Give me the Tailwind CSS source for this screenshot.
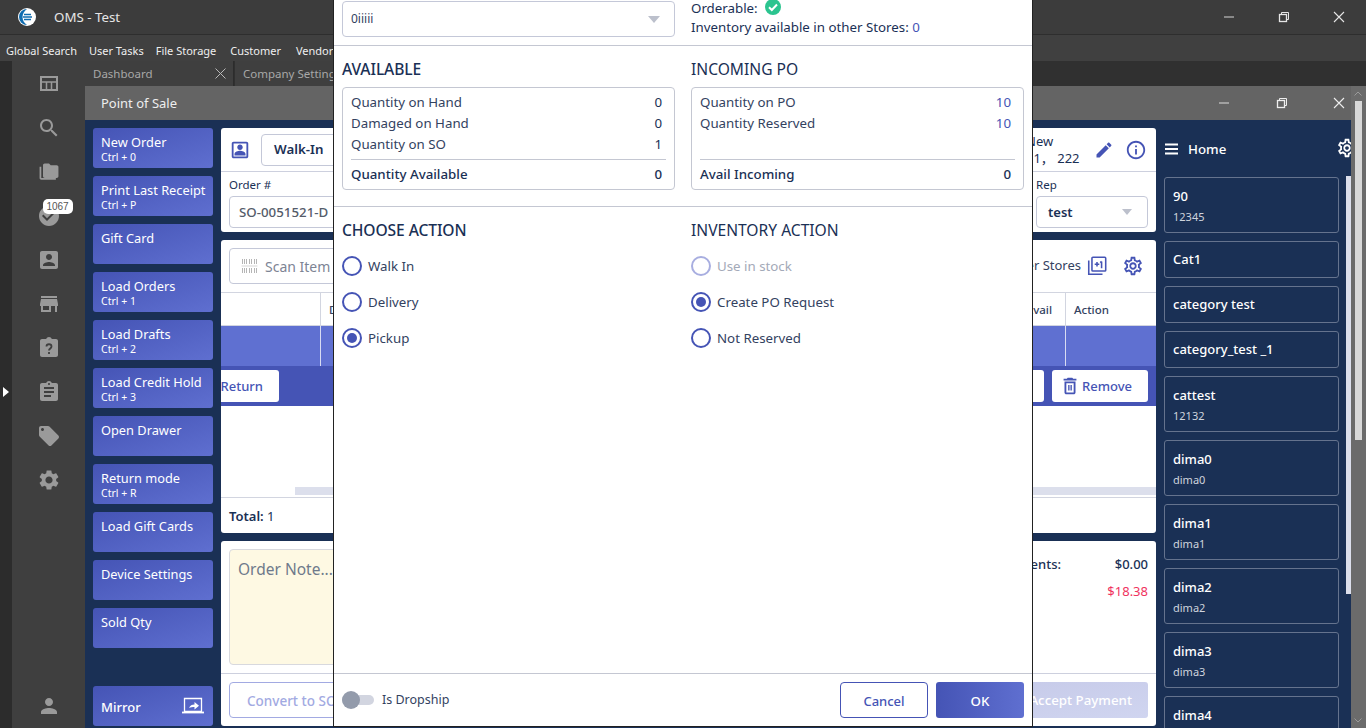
<!doctype html>
<html><head><meta charset="utf-8"><title>OMS - Test</title>
<script src="https://cdn.jsdelivr.net/npm/@tailwindcss/browser@4"></script></head>
<body class="m-0">
<div class="relative w-[1366px] h-[728px] overflow-hidden flex flex-col bg-[#303030] font-['Noto_Sans','Noto_Sans_CJK_SC',sans-serif] text-[13.3px] text-[#1a3055]">

<!-- title bar -->
<div class="h-[35px] shrink-0 flex items-center bg-[#3c3c3c] border-b border-[#2e2e2e] text-[#e6e6e6]">
  <svg class="ml-[18px] w-[18px] h-[18px]" viewBox="0 0 18 18"><circle cx="9" cy="9" r="9" fill="#fff"/><path d="M9 1a8 8 0 0 0 0 16c-3-2-4.500-5-4.500-8S6 3 9 1z" fill="#0f6cb0"/><path d="M6 6.500h7M5 9h9M6 11.500h7" stroke="#0f6cb0" stroke-width="1.300"/></svg>
  <span class="ml-[18px] pt-[2px] text-[13.3px]">OMS - Test</span>
  <div class="ml-auto flex items-center">
    <svg class="w-3 h-3 mr-[43px]" viewBox="0 0 12 12"><path d="M1 6h10" stroke="#aaa" stroke-width="1.400"/></svg>
    <svg class="w-3 h-3 mr-[43px]" viewBox="0 0 12 12" fill="none" stroke="#e6e6e6"><rect x="1.500" y="3.500" width="7" height="7" stroke-width="1.300"/><path d="M3.500 3V1.500h7v7H9"/></svg>
    <svg class="w-3 h-3 mr-[21px]" viewBox="0 0 12 12"><path d="M1 1l10 10M11 1L1 11" stroke="#e6e6e6" stroke-width="1.100"/></svg>
  </div>
</div>
<!-- menu bar -->
<div class="h-[26px] shrink-0 flex items-center gap-[12px] pl-[6px] pt-[6px] bg-[#404040] text-[#efefef] text-[11px]">
  <span>Global Search</span><span>User Tasks</span><span>File Storage</span><span class="ml-[2px]">Customer</span><span class="ml-[3px]">Vendor</span>
</div>

<div class="flex-1 flex min-h-0">
  <!-- collapse strip -->
  <div class="w-3 shrink-0 bg-[#2c2c2c] flex items-center">
    <svg class="w-[6px] h-[10px] ml-[3px] mt-[-5px]" viewBox="0 0 6 10"><path d="M0 0l6 5-6 5z" fill="#fff"/></svg>
  </div>
  <!-- sidebar -->
  <div class="w-[73px] shrink-0 bg-[#3f3f3f] flex flex-col items-center pt-[11px] pb-[10px] gap-5 text-[#9a9a9a]">
    <svg class="w-6 h-6" viewBox="0 0 24 24" fill="none" stroke="currentColor" stroke-width="2"><rect x="4" y="5" width="16" height="13" /><path d="M4 10h16M9.500 10v8M14.500 10v8" stroke-width="1.500"/></svg>
    <svg class="w-6 h-6" viewBox="0 0 24 24" fill="currentColor"><path d="M15.500 14h-.79l-.28-.27C15.410 12.590 16 11.110 16 9.500 16 5.910 13.090 3 9.500 3S3 5.910 3 9.500 5.910 16 9.500 16c1.610 0 3.090-.59 4.230-1.570l.27.28v.79l5 4.990L20.490 19l-4.990-5zm-6 0C7.010 14 5 11.990 5 9.500S7.010 5 9.500 5 14 7.010 14 9.500 11.990 14 9.500 14z"/></svg>
    <svg class="w-6 h-6" viewBox="-2 -2 28 28" fill="currentColor"><path d="M3 6H1v13c0 1.100.9 2 2 2h17v-2H3V6zM21 4h-7l-2-2H7c-1.100 0-1.990.9-1.990 2L5 17c0 1.100.9 2 2 2h14c1.100 0 2-.9 2-2V6c0-1.100-.9-2-2-2z"/></svg>
    <div class="relative w-6 h-6">
      <svg class="w-6 h-6" viewBox="0 0 24 24" fill="currentColor"><path d="M12 2C6.480 2 2 6.480 2 12s4.480 10 10 10 10-4.480 10-10S17.520 2 12 2zm-2 15l-5-5 1.410-1.410L10 14.170l7.590-7.590L19 8l-9 9z"/></svg>
      <span class="absolute left-[6px] top-[-5px] w-[30px] h-[15px] rounded-[5px] bg-white text-[#555] text-[10px] flex items-center justify-center font-['Liberation_Sans',sans-serif]">1067</span>
    </div>
    <svg class="w-6 h-6" viewBox="0 0 24 24" fill="currentColor"><path d="M3 5v14c0 1.100.89 2 2 2h14c1.100 0 2-.9 2-2V5c0-1.100-.9-2-2-2H5c-1.110 0-2 .9-2 2zm12 4c0 1.660-1.340 3-3 3s-3-1.340-3-3 1.340-3 3-3 3 1.340 3 3zm-9 8c0-2 4-3.100 6-3.100s6 1.100 6 3.100v1H6v-1z"/></svg>
    <svg class="w-6 h-6" viewBox="0 0 24 24" fill="currentColor"><path d="M20 4H4v2h16V4zm1 10v-2l-1-5H4l-1 5v2h1v6h10v-6h4v6h2v-6h1zm-9 4H6v-4h6v4z"/></svg>
    <svg class="w-6 h-6" viewBox="0 0 24 24"><path fill="currentColor" d="M19 3h-4.180C14.400 1.840 13.300 1 12 1c-1.300 0-2.400.84-2.820 2H5c-1.100 0-2 .9-2 2v14c0 1.100.9 2 2 2h14c1.100 0 2-.9 2-2V5c0-1.100-.9-2-2-2z"/><path d="M9.500 10.500c0-3 5-3 5 0 0 2-2.500 2-2.500 4M12 16v2" fill="none" stroke="#3f3f3f" stroke-width="1.800"/></svg>
    <svg class="w-6 h-6" viewBox="0 0 24 24" fill="currentColor"><path d="M19 3h-4.180C14.400 1.840 13.300 1 12 1c-1.300 0-2.400.84-2.820 2H5c-1.100 0-2 .9-2 2v14c0 1.100.9 2 2 2h14c1.100 0 2-.9 2-2V5c0-1.100-.9-2-2-2zm-7 0c.55 0 1 .45 1 1s-.45 1-1 1-1-.45-1-1 .45-1 1-1zm2 14H7v-2h7v2zm3-4H7v-2h10v2zm0-4H7V7h10v2z"/></svg>
    <svg class="w-6 h-6" viewBox="0 0 24 24" fill="currentColor"><path d="M21.410 11.580l-9-9C12.050 2.220 11.550 2 11 2H4c-1.100 0-2 .9-2 2v7c0 .55.22 1.050.59 1.420l9 9c.36.36.86.58 1.410.58.55 0 1.050-.22 1.410-.59l7-7c.37-.36.59-.86.59-1.410 0-.55-.23-1.060-.59-1.420zM5.500 7C4.670 7 4 6.330 4 5.500S4.670 4 5.500 4 7 4.670 7 5.500 6.330 7 5.500 7z"/></svg>
    <svg class="w-6 h-6" viewBox="0 0 24 24" fill="currentColor"><path d="M19.140 12.940c.04-.3.06-.61.06-.94 0-.32-.02-.64-.07-.94l2.030-1.580c.18-.14.23-.41.12-.61l-1.920-3.320c-.12-.22-.37-.29-.59-.22l-2.390.96c-.5-.38-1.030-.7-1.620-.94l-.36-2.540c-.04-.24-.24-.41-.48-.41h-3.840c-.24 0-.43.17-.47.41l-.36 2.540c-.59.24-1.130.57-1.620.94l-2.390-.96c-.22-.08-.47 0-.59.22L2.740 8.870c-.12.21-.08.47.12.61l2.030 1.580c-.05.3-.09.63-.09.94s.02.64.07.94l-2.030 1.580c-.18.14-.23.41-.12.61l1.920 3.320c.12.22.37.29.59.22l2.390-.96c.5.38 1.030.7 1.620.94l.36 2.540c.05.24.24.41.48.41h3.840c.24 0 .44-.17.47-.41l.36-2.540c.59-.24 1.130-.56 1.620-.94l2.390.96c.22.08.47 0 .59-.22l1.920-3.320c.12-.22.07-.47-.12-.61l-2.010-1.580zM12 15.600c-1.980 0-3.600-1.620-3.600-3.600s1.620-3.600 3.600-3.600 3.600 1.620 3.600 3.600-1.620 3.600-3.600 3.600z"/></svg>
    <svg class="w-6 h-6 mt-auto" viewBox="0 0 24 24" fill="currentColor"><path d="M12 12c2.210 0 4-1.790 4-4s-1.790-4-4-4-4 1.790-4 4 1.790 4 4 4zm0 2c-2.670 0-8 1.340-8 4v2h16v-2c0-2.660-5.330-4-8-4z"/></svg>
  </div>

  <div class="flex-1 min-w-0 flex flex-col">
    <!-- tabs -->
    <div class="h-[25px] shrink-0 flex text-[11.500px] text-[#a8a8a8]">
      <div class="w-[149px] bg-[#3f3f3f] flex items-center justify-between pl-2 pr-[7px] border-r border-[#2c2c2c]"><span class="pt-px">Dashboard</span><svg class="w-[11px] h-[11px]" viewBox="0 0 11 11"><path d="M.5.5l10 10M10.500.5l-10 10" stroke="#b8b8b8"/></svg></div>
      <div class="w-[110px] bg-[#3f3f3f] flex items-center pl-2 ml-px"><span class="whitespace-nowrap pt-px">Company Settings</span></div>
    </div>
    <div class="flex-1 min-h-0 flex">
      <div class="flex-1 min-w-0 flex flex-col">
        <!-- window title -->
        <div class="h-[34px] shrink-0 bg-[#646464] flex items-center pl-4 text-[#eeeeee] text-[13px]">
          <span class="pt-[2px]">Point of Sale</span>
          <div class="ml-auto flex items-center">
            <svg class="w-3 h-3 mr-[46px]" viewBox="0 0 12 12"><path d="M1 6h10" stroke="#bbb" stroke-width="1.400"/></svg>
            <svg class="w-3 h-3 mr-[45px]" viewBox="0 0 12 12" fill="none" stroke="#eee"><rect x="1.500" y="3.500" width="7" height="7" stroke-width="1.300"/><path d="M3.500 3V1.500h7v7H9"/></svg>
            <svg class="w-3 h-3 mr-[6px]" viewBox="0 0 12 12"><path d="M1 1l10 10M11 1L1 11" stroke="#eee" stroke-width="1.100"/></svg>
          </div>
        </div>
        <!-- POS body -->
        <div class="flex-1 min-h-0 bg-[#1a3055] flex overflow-hidden">
          <!-- action buttons -->
          <div class="w-[136px] shrink-0 pl-2 pr-2 pt-2 flex flex-col gap-2 text-white text-[12.800px] leading-[16px]">
            <div class="h-10 shrink-0 rounded-[3px] bg-linear-to-br from-[#4554b5] to-[#5f6fd0] pl-2 pt-[6px]">New Order<div class="text-[10.500px] leading-[13px] mt-px">Ctrl + 0</div></div>
            <div class="h-10 shrink-0 rounded-[3px] bg-linear-to-br from-[#4554b5] to-[#5f6fd0] pl-2 pt-[6px]">Print Last Receipt<div class="text-[10.500px] leading-[13px] mt-px">Ctrl + P</div></div>
            <div class="h-10 shrink-0 rounded-[3px] bg-linear-to-br from-[#4554b5] to-[#5f6fd0] pl-2 pt-[6px]">Gift Card</div>
            <div class="h-10 shrink-0 rounded-[3px] bg-linear-to-br from-[#4554b5] to-[#5f6fd0] pl-2 pt-[6px]">Load Orders<div class="text-[10.500px] leading-[13px] mt-px">Ctrl + 1</div></div>
            <div class="h-10 shrink-0 rounded-[3px] bg-linear-to-br from-[#4554b5] to-[#5f6fd0] pl-2 pt-[6px]">Load Drafts<div class="text-[10.500px] leading-[13px] mt-px">Ctrl + 2</div></div>
            <div class="h-10 shrink-0 rounded-[3px] bg-linear-to-br from-[#4554b5] to-[#5f6fd0] pl-2 pt-[6px]">Load Credit Hold<div class="text-[10.500px] leading-[13px] mt-px">Ctrl + 3</div></div>
            <div class="h-10 shrink-0 rounded-[3px] bg-linear-to-br from-[#4554b5] to-[#5f6fd0] pl-2 pt-[6px]">Open Drawer</div>
            <div class="h-10 shrink-0 rounded-[3px] bg-linear-to-br from-[#4554b5] to-[#5f6fd0] pl-2 pt-[6px]">Return mode<div class="text-[10.500px] leading-[13px] mt-px">Ctrl + R</div></div>
            <div class="h-10 shrink-0 rounded-[3px] bg-linear-to-br from-[#4554b5] to-[#5f6fd0] pl-2 pt-[6px]">Load Gift Cards</div>
            <div class="h-10 shrink-0 rounded-[3px] bg-linear-to-br from-[#4554b5] to-[#5f6fd0] pl-2 pt-[6px]">Device Settings</div>
            <div class="h-10 shrink-0 rounded-[3px] bg-linear-to-br from-[#4554b5] to-[#5f6fd0] pl-2 pt-[6px]">Sold Qty</div>
            <div class="h-10 shrink-0 rounded-[3px] bg-linear-to-br from-[#4554b5] to-[#5f6fd0] pl-2 pr-2 mt-[30px] flex items-center justify-between text-[13px] font-medium"><span class="pt-[2px]">Mirror</span>
              <svg class="w-6 h-[18px]" viewBox="0 0 24 18" fill="none" stroke="#fff"><path d="M3.500 1.500h17v13h-17z" stroke-width="1.300"/><path d="M1 15.500h22" stroke-width="1.800"/><path d="M8 11c1-2.500 3-3.500 5.500-3.500V5l4.500 3.800-4.500 3.700v-2.500c-2 0-4 .2-5.500 1z" fill="#fff" stroke="none"/></svg>
            </div>
          </div>

          <!-- main column -->
          <div class="w-[935px] shrink-0 pt-2 flex flex-col gap-2">
            <!-- customer card -->
            <div class="h-[104px] shrink-0 bg-white rounded-[3px] flex flex-col">
              <div class="h-[44px] shrink-0 flex items-center justify-between pl-2 pr-[8px] border-b border-[#cdd0de]">
                <div class="flex items-center gap-[10px]">
                  <svg class="w-[22px] h-[22px]" viewBox="0 0 24 24" fill="#4554b5"><path d="M19 5v14H5V5h14m0-2H5c-1.110 0-2 .9-2 2v14c0 1.100.89 2 2 2h14c1.100 0 2-.9 2-2V5c0-1.100-.9-2-2-2zm-7 9c-1.650 0-3-1.350-3-3s1.350-3 3-3 3 1.350 3 3-1.350 3-3 3zm6 6H6v-1.530c0-2.500 3.970-3.580 6-3.580s6 1.080 6 3.580V18z"/></svg>
                  <span class="h-8 w-[110px] border border-[#c4c8d8] rounded-[4px] flex items-center pl-3 font-semibold">Walk-In</span>
                </div>
                <div class="flex items-center">
                  <div class="w-[55px] text-[13px] leading-[17px] mr-[13px] text-left whitespace-nowrap pt-px">New<br>11， 222</div>
                  <svg class="w-[20px] h-[20px] mr-[11px]" viewBox="0 0 24 24" fill="#4554b5"><path d="M3 17.250V21h3.750L17.810 9.940l-3.750-3.750L3 17.250zM20.710 7.040c.39-.39.39-1.020 0-1.410l-2.340-2.340c-.39-.39-1.020-.39-1.410 0l-1.830 1.830 3.750 3.750 1.830-1.830z"/></svg>
                  <svg class="w-[22px] h-[22px] mr-[1px]" viewBox="0 0 24 24" fill="#4554b5"><path d="M11 7h2v2h-2zm0 4h2v6h-2zm1-9C6.480 2 2 6.480 2 12s4.480 10 10 10 10-4.480 10-10S17.520 2 12 2zm0 18c-4.410 0-8-3.590-8-8s3.590-8 8-8 8 3.590 8 8-3.590 8-8 8z"/></svg>
                </div>
              </div>
              <div class="flex justify-between px-2 pt-[5px]">
                <div><div class="text-[11.500px] leading-[16px]">Order #</div><div class="mt-[3px] w-[200px] h-8 border border-[#c4c8d8] rounded-[4px] flex items-center pl-[9px] pt-[2px] font-medium text-[#555c6a] text-[13.3px]">SO-0051521-D</div></div>
                <div><div class="text-[11.500px] leading-[16px]">Rep</div><div class="mt-[3px] w-[112px] h-8 border border-[#c4c8d8] rounded-[4px] flex items-center justify-between pl-[11px] pr-[15px] font-semibold text-[13px]"><span class="pt-[2px]">test</span><span class="w-0 h-0 border-x-[5px] border-x-transparent border-t-[6px] border-t-[#bcc0cc]"></span></div></div>
              </div>
            </div>

            <!-- items card -->
            <div class="h-[293px] shrink-0 bg-white rounded-[3px] flex flex-col">
              <div class="h-[52px] shrink-0 flex items-center justify-between pl-2 pr-[12px]">
                <div class="w-[200px] h-9 border border-[#c4c8d8] rounded-[4px] flex items-center gap-[7px] pl-[11px] text-[#7d8494] text-[14px]">
                  <svg class="w-[17px] h-[14px]" viewBox="0 0 16 14" fill="none" stroke="#b5b5b5"><path d="M0 7h16" stroke="#d5d5d5"/><path d="M1 0v5M3 0v5M5 0v5M8 0v5M10 0v5M13 0v5M15 0v5M1 9v5M3 9v5M5 9v5M8 9v5M10 9v5M13 9v5M15 9v5"/></svg>
                  Scan Item
                </div>
                <div class="flex items-center">
                  <span class="mr-[5px] text-[#33425f] text-[13px]">Other Stores</span>
                  <svg class="w-[22px] h-[22px] mr-[14px]" viewBox="0 0 24 24" fill="none" stroke="#4554b5" stroke-width="1.700"><path d="M3 6v15h15"/><rect x="6.500" y="2.500" width="15" height="15" rx="1"/><path d="M9.500 10h5M12 7.500v5M17 7v7.500l0 0M17 7l-1.500 1.200"/></svg>
                  <svg class="w-[22px] h-[22px]" viewBox="0 0 24 24" fill="#4554b5"><path d="M19.430 12.980c.04-.32.07-.64.07-.98 0-.34-.03-.66-.07-.98l2.110-1.650c.19-.15.24-.42.12-.64l-2-3.460c-.09-.16-.26-.25-.44-.25-.06 0-.12.01-.17.03l-2.490 1c-.52-.4-1.080-.73-1.690-.98l-.38-2.650C14.460 2.180 14.250 2 14 2h-4c-.25 0-.46.18-.49.42l-.38 2.650c-.61.25-1.170.59-1.690.98l-2.490-1c-.06-.02-.12-.03-.18-.03-.17 0-.34.09-.43.25l-2 3.460c-.13.22-.07.49.12.64l2.110 1.650c-.04.32-.07.65-.07.98 0 .33.03.66.07.98l-2.110 1.650c-.19.15-.24.42-.12.64l2 3.460c.09.16.26.25.44.25.06 0 .12-.01.17-.03l2.490-1c.52.4 1.080.73 1.690.98l.38 2.650c.03.24.24.42.49.42h4c.25 0 .46-.18.49-.42l.38-2.650c.61-.25 1.170-.59 1.690-.98l2.490 1c.06.02.12.03.18.03.17 0 .34-.09.43-.25l2-3.460c.12-.22.07-.49-.12-.64l-2.110-1.650zm-1.980-1.710c.04.31.05.52.05.73 0 .21-.02.43-.05.73l-.14 1.130.89.7 1.080.84-.7 1.210-1.270-.51-1.040-.42-.9.68c-.43.32-.84.56-1.250.73l-1.060.43-.16 1.130-.2 1.350h-1.400l-.19-1.350-.16-1.130-1.060-.43c-.43-.18-.83-.41-1.230-.71l-.91-.7-1.060.43-1.270.51-.7-1.210 1.080-.84.89-.7-.14-1.130c-.03-.31-.05-.54-.05-.74s.02-.43.05-.73l.14-1.130-.89-.7-1.080-.84.7-1.210 1.270.51 1.040.42.9-.68c.43-.32.84-.56 1.250-.73l1.060-.43.16-1.130.2-1.350h1.390l.19 1.350.16 1.130 1.060.43c.43.18.83.41 1.230.71l.91.7 1.060-.43 1.270-.51.7 1.210-1.070.85-.89.7.14 1.130zM12 8c-2.210 0-4 1.790-4 4s1.790 4 4 4 4-1.790 4-4-1.790-4-4-4zm0 6c-1.100 0-2-.9-2-2s.9-2 2-2 2 .9 2 2-.9 2-2 2z"/></svg>
                </div>
              </div>
              <div class="h-[34px] shrink-0 flex border-y border-[#d2d5e0] text-[11.500px] font-medium text-[#33425f]">
                <div class="w-[100px] border-r border-[#d2d5e0]"></div>
                <div class="flex-1 pl-2 pt-[2px] flex items-center">Description</div>
                <div class="w-[60px] flex items-center justify-end pt-[2px] pr-[13px] border-r border-[#d2d5e0]">Avail</div>
                <div class="w-[90px] pl-2 pt-[2px] flex items-center">Action</div>
              </div>
              <div class="h-10 shrink-0 bg-[#5f70d1] flex">
                <div class="w-[100px] border-r border-[#d8dcf2]"></div>
                <div class="flex-1 border-r border-[#d8dcf2] mr-[90px]"></div>
              </div>
              <div class="h-10 shrink-0 bg-[#4554b5] flex items-center justify-between pr-2">
                <div class="w-[58px] h-8 bg-white rounded-r-[3px] text-[#4554b5] font-medium flex items-center justify-end pr-4 pt-[2px] text-[13px]">Return</div>
                <div class="flex items-center gap-2">
                  <div class="w-[48px] h-8 bg-white rounded-[3px]"></div>
                  <div class="w-[96px] h-8 bg-white rounded-[3px] text-[#4554b5] font-medium flex items-center pl-[7px] gap-px text-[13px]">
                    <svg class="w-[22px] h-[22px]" viewBox="0 0 24 24" fill="#4554b5"><path d="M6 19c0 1.100.9 2 2 2h8c1.100 0 2-.9 2-2V7H6v12zM8 9h8v10H8V9zm7.500-5l-1-1h-5l-1 1H5v2h14V4h-3.500zM10 11h1.500v6H10zM12.500 11H14v6h-1.500z"/></svg>
                    <span class="pt-[2px]">Remove</span>
                  </div>
                </div>
              </div>
              <div class="flex-1 flex flex-col justify-end">
                <div class="h-2 ml-[74px] bg-[#dcdfec] mb-[2px]"></div>
              </div>
              <div class="h-9 shrink-0 border-t border-[#d2d5e0] flex items-center pl-2 pt-[2px] text-[13px]"><span class="font-semibold">Total:</span>&nbsp;1</div>
            </div>

            <!-- note / payment card -->
            <div class="flex-1 min-h-0 mb-[2px] bg-white rounded-[3px] flex flex-col">
              <div class="flex-1 min-h-0 flex justify-between border-b border-[#cdd0de] pl-2 pr-2 pt-2 pb-2">
                <div class="w-[300px] bg-[#fef9e3] border border-[#d8d9de] rounded-[4px] pl-2 pt-[8px] text-[15.500px] text-[#6f7a8b]">Order Note...</div>
                <div class="w-[120px] text-[13px] pt-[2px]">
                  <div class="flex justify-between h-[28px] items-center font-medium"><span class="whitespace-nowrap -ml-[32px]">Payments:</span><span>$0.00</span></div>
                  <div class="flex justify-end text-[#f0325e] mt-[-1px] h-[28px] items-center">$18.38</div>
                </div>
              </div>
              <div class="h-[52px] shrink-0 flex items-center justify-between px-2">
                <div class="w-[200px] h-9 border border-[#a2aae2] rounded-[4px] flex items-center pl-[17px] pt-[2px] text-[#a2aae2] text-[13.500px] font-medium">Convert to SO</div>
                <div class="w-[190px] h-9 rounded-[3px] bg-linear-to-br from-[#c5c9e8] to-[#d0d5f0] flex items-center justify-end pr-4 pt-[2px] text-white text-[13.300px] font-medium">Accept Payment</div>
              </div>
            </div>
          </div>

          <!-- home panel -->
          <div class="relative flex-1 min-w-0 text-white">
            <div class="h-[57px] flex items-center pl-2 gap-[8px] text-[13.300px] font-medium">
              <svg class="w-4 h-4" viewBox="0 0 16 16" fill="#fff"><path d="M1 2.500h13v2H1zM1 7h13v2H1zM1 11.500h13v2H1z"/></svg><span class="pt-[2px]">Home</span>
              <svg class="absolute left-[180px] top-[17px] w-[22px] h-[22px]" viewBox="0 0 24 24" fill="#fff"><path d="M19.430 12.980c.04-.32.07-.64.07-.98 0-.34-.03-.66-.07-.98l2.110-1.650c.19-.15.24-.42.12-.64l-2-3.460c-.09-.16-.26-.25-.44-.25-.06 0-.12.01-.17.03l-2.490 1c-.52-.4-1.080-.73-1.690-.98l-.38-2.650C14.460 2.180 14.250 2 14 2h-4c-.25 0-.46.18-.49.42l-.38 2.650c-.61.25-1.170.59-1.690.98l-2.490-1c-.06-.02-.12-.03-.18-.03-.17 0-.34.09-.43.25l-2 3.460c-.13.22-.07.49.12.64l2.110 1.650c-.04.32-.07.65-.07.98 0 .33.03.66.07.98l-2.110 1.650c-.19.15-.24.42-.12.64l2 3.460c.09.16.26.25.44.25.06 0 .12-.01.17-.03l2.490-1c.52.4 1.080.73 1.690.98l.38 2.650c.03.24.24.42.49.42h4c.25 0 .46-.18.49-.42l.38-2.650c.61-.25 1.170-.59 1.690-.98l2.490 1c.06.02.12.03.18.03.17 0 .34-.09.43-.25l2-3.460c.12-.22.07-.49-.12-.64l-2.110-1.650zm-1.980-1.710c.04.31.05.52.05.73 0 .21-.02.43-.05.73l-.14 1.130.89.7 1.080.84-.7 1.210-1.270-.51-1.040-.42-.9.68c-.43.32-.84.56-1.250.73l-1.060.43-.16 1.130-.2 1.350h-1.400l-.19-1.350-.16-1.130-1.060-.43c-.43-.18-.83-.41-1.230-.71l-.91-.7-1.060.43-1.270.51-.7-1.210 1.080-.84.89-.7-.14-1.130c-.03-.31-.05-.54-.05-.74s.02-.43.05-.73l.14-1.130-.89-.7-1.080-.84.7-1.210 1.270.51 1.040.42.9-.68c.43-.32.84-.56 1.250-.73l1.060-.43.16-1.130.2-1.350h1.390l.19 1.350.16 1.130 1.060.43c.43.18.83.41 1.230.71l.91.7 1.060-.43 1.270-.51.7 1.210-1.070.85-.89.7.14 1.130zM12 8c-2.210 0-4 1.790-4 4s1.790 4 4 4 4-1.790 4-4-1.790-4-4-4zm0 6c-1.100 0-2-.9-2-2s.9-2 2-2 2 .9 2 2-.9 2-2 2z"/></svg>
            </div>
            <div class="absolute left-[190px] top-[56px] w-[5px] h-[418px] bg-[#dcdfec]"></div>
            <div class="pl-2 w-[183px] flex flex-col gap-2 text-[13px] font-medium">
              <div class="h-[56px] shrink-0 border border-[#65738e] rounded-[3px] pl-2 pt-[9px] leading-[18px]">90<div class="text-[11px] font-normal text-[#cfd4de] mt-[3px]">12345</div></div>
              <div class="h-[37px] shrink-0 border border-[#65738e] rounded-[3px] pl-2 flex items-center">Cat1</div>
              <div class="h-[37px] shrink-0 border border-[#65738e] rounded-[3px] pl-2 flex items-center">category test</div>
              <div class="h-[37px] shrink-0 border border-[#65738e] rounded-[3px] pl-2 flex items-center">category_test _1</div>
              <div class="h-[56px] shrink-0 border border-[#65738e] rounded-[3px] pl-2 pt-[9px] leading-[18px]">cattest<div class="text-[11px] font-normal text-[#cfd4de] mt-[3px]">12132</div></div>
              <div class="h-[56px] shrink-0 border border-[#65738e] rounded-[3px] pl-2 pt-[9px] leading-[18px]">dima0<div class="text-[11px] font-normal text-[#cfd4de] mt-[3px]">dima0</div></div>
              <div class="h-[56px] shrink-0 border border-[#65738e] rounded-[3px] pl-2 pt-[9px] leading-[18px]">dima1<div class="text-[11px] font-normal text-[#cfd4de] mt-[3px]">dima1</div></div>
              <div class="h-[56px] shrink-0 border border-[#65738e] rounded-[3px] pl-2 pt-[9px] leading-[18px]">dima2<div class="text-[11px] font-normal text-[#cfd4de] mt-[3px]">dima2</div></div>
              <div class="h-[56px] shrink-0 border border-[#65738e] rounded-[3px] pl-2 pt-[9px] leading-[18px]">dima3<div class="text-[11px] font-normal text-[#cfd4de] mt-[3px]">dima3</div></div>
              <div class="h-[56px] shrink-0 border border-[#65738e] rounded-[3px] pl-2 pt-[9px] leading-[18px]">dima4</div>
            </div>
          </div>
        </div>
      </div>
      <!-- window scrollbar -->
      <div class="w-[15px] shrink-0 bg-[#6b6b6b] relative">
        <svg class="absolute left-[3px] top-[5px] w-2 h-[5px]" viewBox="0 0 8 5" fill="none" stroke="#9a9a9a"><path d="M.5 4.500L4 1l3.500 3.500"/></svg>
        <div class="absolute left-[4px] top-[15px] w-[7px] h-[339px] bg-[#d8d8d8]"></div>
        <svg class="absolute left-[3px] bottom-[5px] w-2 h-[5px]" viewBox="0 0 8 5" fill="none" stroke="#9a9a9a"><path d="M.5.500L4 4l3.500-3.500"/></svg>
      </div>
    </div>
  </div>
</div>

<!-- modal -->
<div class="absolute left-[333px] top-0 w-[700px] h-[727px] bg-white border-x border-b border-[#222] flex flex-col text-[#1a3055]">
  <div class="h-[46px] shrink-0 border-b border-[#c4c7d2] grid grid-cols-2 gap-4 px-2 pt-px">
    <div class="h-9 border border-[#c4c8d8] rounded-[4px] flex items-center justify-between pl-2 pr-[14px] text-[12px] text-[#33425f]">0iiiii<span class="w-0 h-0 border-x-[6px] border-x-transparent border-t-[7px] border-t-[#bcc0cc]"></span></div>
    <div class="text-[13.300px] leading-[19px]">
      <div class="flex items-center gap-[7px] h-[16px] mt-[-1px]">Orderable:
        <svg class="w-4 h-4 -mt-[2px]" viewBox="0 0 16 16"><circle cx="8" cy="8" r="8" fill="#2bc48f"/><path d="M4 8.300l2.800 2.700L12 5.500" fill="none" stroke="#fff" stroke-width="2"/></svg></div>
      <div class="mt-[2px]">Inventory available in other Stores: <span class="text-[#4554b5]">0</span></div>
    </div>
  </div>
  <div class="h-[161px] shrink-0 border-b border-[#c4c7d2] grid grid-cols-2 gap-4 px-2 pt-[13px]">
    <div>
      <div class="h-[20px] text-[15.600px] leading-[20px] font-medium tracking-[-0.1px]">AVAILABLE</div>
      <div class="mt-[8px] h-[103px] border border-[#c4c7d2] rounded-[4px] px-2 pt-[4px] text-[13.300px] leading-[21px] text-[#33425f]">
        <div class="flex justify-between pr-[4px]"><span>Quantity on Hand</span><span class="text-[#1a3055]">0</span></div>
        <div class="flex justify-between pr-[4px]"><span>Damaged on Hand</span><span class="text-[#1a3055]">0</span></div>
        <div class="flex justify-between pr-[4px]"><span>Quantity on SO</span><span class="text-[#1a3055]">1</span></div>
        <div class="flex justify-between pr-[4px] border-t border-[#c4c7d2] mt-[4px] pt-[4px] font-medium text-[#1a3055]"><span>Quantity Available</span><span>0</span></div>
      </div>
    </div>
    <div>
      <div class="h-[20px] text-[15.600px] leading-[20px]">INCOMING PO</div>
      <div class="mt-[8px] h-[103px] border border-[#c4c7d2] rounded-[4px] px-2 pt-[4px] text-[13.300px] leading-[21px] text-[#33425f]">
        <div class="flex justify-between pr-[4px]"><span>Quantity on PO</span><span class="text-[#4554b5]">10</span></div>
        <div class="flex justify-between pr-[4px]"><span>Quantity Reserved</span><span class="text-[#4554b5]">10</span></div>
        <div class="h-[21px]"></div>
        <div class="flex justify-between pr-[4px] border-t border-[#c4c7d2] mt-[4px] pt-[4px] font-medium text-[#1a3055]"><span>Avail Incoming</span><span>0</span></div>
      </div>
    </div>
  </div>
  <div class="flex-1 min-h-0 grid grid-cols-2 gap-4 px-2 pt-[13px]">
    <div>
      <div class="h-[20px] text-[15.600px] leading-[20px] font-medium tracking-[-0.1px]">CHOOSE ACTION</div>
      <div class="mt-[16px] flex flex-col gap-4 text-[13.300px] text-[#33425f]">
        <div class="h-5 flex items-center gap-[6px]"><span class="w-5 h-5 rounded-full border-2 border-[#4554b5]"></span><span class="pt-[2px]">Walk In</span></div>
        <div class="h-5 flex items-center gap-[6px]"><span class="w-5 h-5 rounded-full border-2 border-[#4554b5]"></span><span class="pt-[2px]">Delivery</span></div>
        <div class="h-5 flex items-center gap-[6px]"><span class="w-5 h-5 rounded-full border-2 border-[#4554b5] flex items-center justify-center"><span class="w-[10px] h-[10px] rounded-full bg-[#4554b5]"></span></span><span class="pt-[2px]">Pickup</span></div>
      </div>
    </div>
    <div>
      <div class="h-[20px] text-[15.600px] leading-[20px]">INVENTORY ACTION</div>
      <div class="mt-[16px] flex flex-col gap-4 text-[13.300px] text-[#33425f]">
        <div class="h-5 flex items-center gap-[6px] text-[#a3a9b8]"><span class="w-5 h-5 rounded-full border-2 border-[#a8aee0]"></span><span class="pt-[2px]">Use in stock</span></div>
        <div class="h-5 flex items-center gap-[6px]"><span class="w-5 h-5 rounded-full border-2 border-[#4554b5] flex items-center justify-center"><span class="w-[10px] h-[10px] rounded-full bg-[#4554b5]"></span></span><span class="pt-[2px]">Create PO Request</span></div>
        <div class="h-5 flex items-center gap-[6px]"><span class="w-5 h-5 rounded-full border-2 border-[#4554b5]"></span><span class="pt-[2px]">Not Reserved</span></div>
      </div>
    </div>
  </div>
  <div class="h-[53px] shrink-0 border-t border-[#c4c7d2] flex items-center px-2">
    <div class="relative w-8 h-[10px] bg-[#d2d5e0] rounded-full mr-2">
      <span class="absolute left-0 top-[-4px] w-[18px] h-[18px] rounded-full bg-[#939bab]"></span>
    </div>
    <span class="text-[12.500px] text-[#33425f] pt-px">Is Dropship</span>
    <div class="ml-auto w-[88px] h-9 border border-[#4554b5] rounded-[4px] flex items-center justify-center pt-[3px] text-[#4554b5] text-[13px] font-medium">Cancel</div>
    <div class="ml-2 w-[88px] h-9 rounded-[3px] bg-linear-to-r from-[#4554b5] to-[#5f6fd0] flex items-center justify-center pt-[3px] text-white text-[13.300px] font-medium">OK</div>
  </div>
</div>
</div>
</body></html>
